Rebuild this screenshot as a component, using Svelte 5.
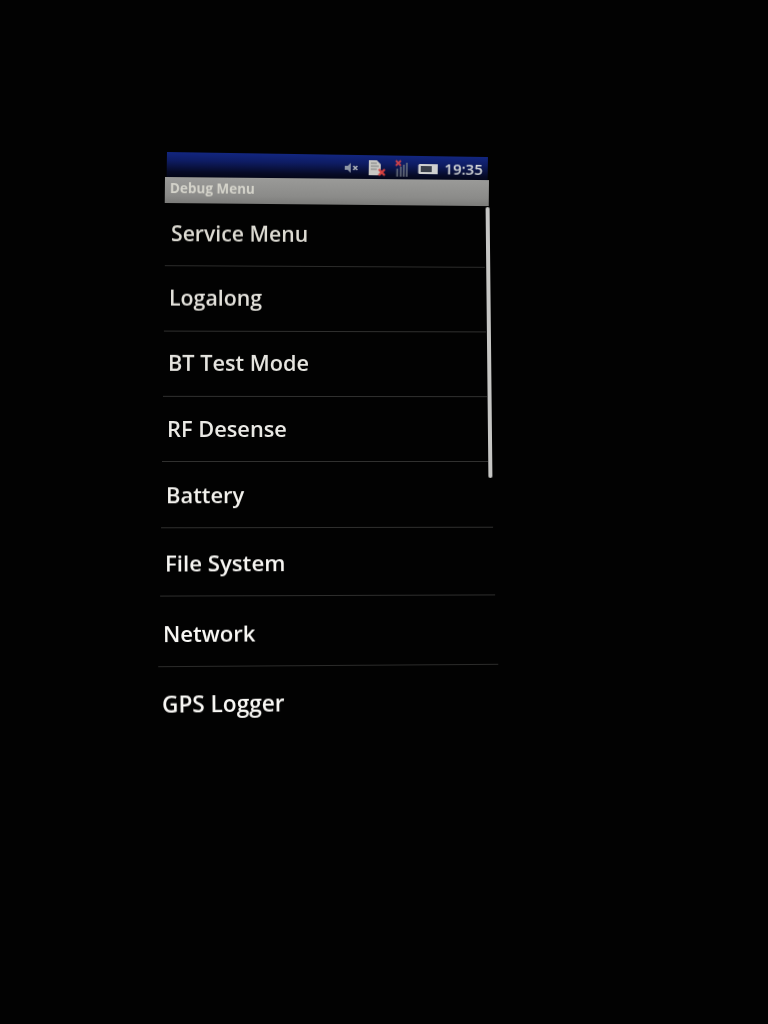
<script>
  const rows = [
    { label: 'Service Menu', left: 165, width: 320, height: 62, pad: 6, pt: 0, pb: 5, size: 21.2, tilt: 0.3, color: '#dddbd3', line: '#2b2b2a' },
    { label: 'Logalong', left: 164, width: 322, height: 65, pad: 5, pt: 0, pb: 4, size: 21.3, tilt: 0.15, color: '#e2e0da', line: '#2f2f2e' },
    { label: 'BT Test Mode', left: 163, width: 324, height: 65, pad: 5, pt: 0, pb: 4, size: 21.7, tilt: 0.05, color: '#e6e5e0', line: '#30302f' },
    { label: 'RF Desense', left: 162, width: 326, height: 65, pad: 5, pt: 0, pb: 2, size: 21.8, tilt: 0, color: '#eae9e5', line: '#30302f' },
    { label: 'Battery', left: 161, width: 332, height: 66, pad: 5, pt: 0, pb: 0, size: 21.9, tilt: -0.1, color: '#f2f1ed', line: '#2f2f2e' },
    { label: 'File System', left: 160, width: 335, height: 68, pad: 5, pt: 2, pb: 0, size: 22.2, tilt: -0.2, color: '#f6f5f2', line: '#2e2e2d' },
    { label: 'Network', left: 158, width: 340, height: 70, pad: 5, pt: 2, pb: 0, size: 22.1, tilt: -0.4, color: '#faf9f6', line: '#2b2b2a' },
    { label: 'GPS Logger', left: 157, width: 342, height: 72, pad: 5, pt: 2, pb: 0, size: 22.6, tilt: -0.6, color: '#f8f7f4', line: 'transparent' }
  ];
</script>

<main class="page">
  <header class="status">
    <svg class="ico mute" viewBox="0 0 16 12" aria-hidden="true">
      <path d="M1 4h3l3-3v10L4 8H1z" fill="#8f97a6" />
      <path d="M9.5 4l4 4M13.5 4l-4 4" stroke="#aeb2ba" stroke-width="1.6" />
    </svg>
    <svg class="ico sd" viewBox="0 0 19 18" aria-hidden="true">
      <path d="M1 1h8l4 4v11H1z" fill="#c9c8c4" />
      <path d="M3 4h6M3 7h8M3 10h6" stroke="#7d7c7c" stroke-width="1.1" />
      <path d="M11 10l6 6M17 10l-6 6" stroke="#d9413f" stroke-width="2.2" />
    </svg>
    <svg class="ico signal" viewBox="0 0 14 18" aria-hidden="true">
      <path d="M2.500 9v8M6 7v10M9 5v12M12 3v14" stroke="#69707f" stroke-width="1.6" />
      <path d="M1 1l5 5M6 1L1 6" stroke="#c9414a" stroke-width="1.9" />
    </svg>
    <svg class="ico battery" viewBox="0 0 20 12" aria-hidden="true">
      <path d="M0.500 2.500Q0.500 1 2 1h18v10H2q-1.500 0-1.500-1.500z" fill="#cfd0d0" />
      <rect x="3" y="3" width="11" height="6" fill="#3a3f4a" />
    </svg>
    <span class="time">19:35</span>
  </header>

  <div class="title">Debug Menu</div>

  <div class="list">
    <div class="scrollbar"></div>
    {#each rows as row}
      <div
        class="row"
        style="--left:{row.left}px;--w:{row.width}px;--h:{row.height}px;--pad:{row.pad}px;--pt:{row.pt}px;--pb:{row.pb}px;--size:{row.size}px;--tilt:{row.tilt}deg;--c:{row.color};--line:{row.line}"
      >
        <span>{row.label}</span>
      </div>
    {/each}
  </div>
</main>

<style>
  :global(body) {
    margin: 0;
    background: #000;
  }

  .page {
    box-sizing: border-box;
    width: 768px;
    height: 1024px;
    padding-top: 152px;
    background: #020202;
    overflow: hidden;
    font-family: "Open Sans", "Noto Sans", sans-serif;
    display: flex;
    flex-direction: column;
  }

  .status {
    box-sizing: border-box;
    width: 321px;
    height: 25px;
    margin-left: 167px;
    padding-right: 5px;
    display: flex;
    align-items: center;
    justify-content: flex-end;
    background: linear-gradient(#122680 0%, #0e1c62 35%, #060a26 78%, #030515 100%);
    transform: rotate(0.9deg);
    transform-origin: 0 0;
    filter: blur(0.6px);
  }

  .ico {
    display: block;
    flex: none;
  }

  .mute {
    width: 16px;
    height: 12px;
    margin-right: 8px;
  }

  .sd {
    width: 19px;
    height: 18px;
    margin-right: 8px;
  }

  .signal {
    width: 14px;
    height: 18px;
    margin-right: 9px;
  }

  .battery {
    width: 20px;
    height: 12px;
    margin-right: 7px;
  }

  .time {
    font-size: 15px;
    font-weight: 600;
    color: #d8dadb;
    line-height: 1;
  }

  .title {
    box-sizing: border-box;
    width: 324px;
    height: 26px;
    margin-left: 165px;
    padding-left: 5px;
    padding-bottom: 4px;
    display: flex;
    align-items: center;
    background: linear-gradient(#9a9a98, #8b8b89 70%, #7b7b79);
    color: #d5d4cb;
    font-size: 13.5px;
    font-weight: 700;
    transform: rotate(0.55deg);
    transform-origin: 0 0;
    filter: blur(0.6px);
  }

  .list {
    position: relative;
    display: flex;
    flex-direction: column;
    padding-top: 2px;
  }

  .scrollbar {
    position: absolute;
    left: 487px;
    top: 4px;
    width: 4px;
    height: 271px;
    border-radius: 2px;
    background: #c6c6c4;
    filter: blur(0.4px);
    transform: rotate(-0.6deg);
  }

  .row {
    box-sizing: border-box;
    width: var(--w);
    height: var(--h);
    margin-left: var(--left);
    padding: var(--pt) 0 var(--pb) var(--pad);
    display: flex;
    align-items: center;
    border-bottom: 1px solid var(--line);
    color: var(--c);
    font-size: var(--size);
    font-weight: 600;
    transform: rotate(var(--tilt));
    filter: blur(0.45px);
    white-space: nowrap;
  }
</style>
